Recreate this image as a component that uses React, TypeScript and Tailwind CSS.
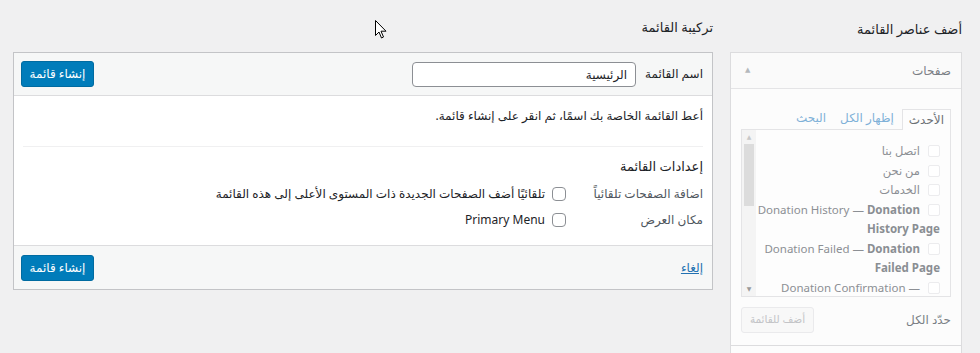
import React from 'react'

const font = "font-['Noto_Sans','DejaVu_Sans',sans-serif]"

function BlueButton({ label }: { label: string }) {
  return (
    <button className="h-[26px] w-[73px] whitespace-nowrap rounded-[3px] border border-[#006ba1] bg-[#007cba] text-[12px] leading-none text-white">
      {label}
    </button>
  )
}

function Box() {
  return <span className="inline-block h-[14px] w-[14px] shrink-0 rounded-[4px] border border-[#8c8f94] bg-white" />
}

const pages: { text: string; bold?: string }[] = [
  { text: 'اتصل بنا' },
  { text: 'من نحن' },
  { text: 'الخدمات' },
  { text: 'Donation History — ', bold: 'Donation History Page' },
  { text: 'Donation Failed — ', bold: 'Donation Failed Page' },
  { text: 'Donation Confirmation — ', bold: 'Donation Confirmation Page' },
]

function AddItems() {
  return (
    <div className="w-[232px] shrink-0">
      <h2 className="h-[52px] pt-[20px] text-[13px] text-[#1d2327]">أضف عناصر القائمة</h2>
      <div className="border border-[#dcdcde] bg-[#fcfcfc]">
        <div className="flex h-[36px] items-center justify-between border-b border-[#e4e4e6] bg-[#fafafa] pl-[14px] pr-[10px]">
          <span className="text-[12px] text-[#7a7f85]">صفحات</span>
          <span className="text-[7px] text-[#b4b8bc]">▲</span>
        </div>
        <div className="px-[10px] pt-[19px]">
          <div className="flex items-end text-[12px]">
            <span className="-mb-px h-[21px] border border-b-0 border-[#e4e4e6] bg-[#fdfdfd] px-[6px] leading-[20px] text-[#6b7075]">
              الأحدث
            </span>
            <span className="mr-[8px] h-[21px] leading-[20px] text-[#7fb1d8]">إظهار الكل</span>
            <span className="mr-[14px] h-[21px] leading-[20px] text-[#7fb1d8]">البحث</span>
          </div>
          <div className="flex h-[168px] border border-[#e4e4e6] bg-[#fdfdfd]">
            <div className="flex-1 overflow-hidden pr-[10px] pt-[11px] text-[11.5px] leading-[19.5px] text-[#8c8f94]">
              {pages.map((p, i) => (
                <div key={i}>
                  <span className="ml-[8px] inline-block h-[12px] w-[12px] rounded-[2px] border border-[#ececee] bg-white align-[-2px]" />
                  {p.text}
                  {p.bold && <b className="font-bold text-[#8a8e93]">{p.bold}</b>}
                </div>
              ))}
            </div>
            <div className="flex w-[14px] shrink-0 flex-col items-center bg-[#f4f4f4]">
              <span className="h-[14px] text-[6px] leading-[14px] text-[#c8c8c8]">▲</span>
              <div className="h-[62px] w-[10px] bg-[#dcdcdc]" />
              <div className="flex-1" />
              <span className="h-[14px] text-[6px] leading-[14px] text-[#9a9a9a]">▼</span>
            </div>
          </div>
          <div className="flex h-[48px] items-center justify-between pb-[2px]">
            <span className="text-[12px] text-[#7a7f85]">حدّد الكل</span>
            <span className="flex h-[26px] w-[73px] items-center justify-center whitespace-nowrap rounded-[3px] border border-[#eaeaec] bg-[#f8f8f8] text-[10.5px] text-[#c3c4c7]">
              أضف للقائمة
            </span>
          </div>
        </div>
        <div className="h-[14px] border-t border-[#dcdcde]" />
      </div>
    </div>
  )
}

function MenuStructure() {
  return (
    <div className="flex-1">
      <h2 className="h-[52px] pt-[18px] text-[13px] text-[#1d2327]">تركيبة القائمة</h2>
      <div className="border border-[#c3c4c7] bg-white">
        <div className="flex h-[43px] items-center justify-between border-b border-[#dcdcde] bg-[#f6f7f7] pl-[7px] pr-[9px]">
          <div className="flex items-center gap-[9px]">
            <span className="text-[12px] text-[#1d2327]">اسم القائمة</span>
            <input
              readOnly
              value="الرئيسية"
              className="h-[25px] w-[224px] rounded-[4px] border border-[#8c8f94] bg-white px-[8px] text-[12px] text-[#1d2327] outline-none"
            />
          </div>
          <BlueButton label="إنشاء قائمة" />
        </div>
        <div className="h-[149px] px-[9px]">
          <p className="h-[50px] pt-[10px] text-[12px] leading-[20px] text-[#1d2327]">
            أعط القائمة الخاصة بك اسمًا، ثم انقر على إنشاء قائمة.
          </p>
          <div className="border-t border-[#f0f0f1]" />
          <h3 className="h-[36px] pt-[9px] text-[13px] leading-[20px] text-[#1d2327]">إعدادات القائمة</h3>
          <div className="flex h-[22px] items-center">
            <span className="w-[137px] text-[12px] text-[#50575e]">اضافة الصفحات تلقائياً</span>
            <Box />
            <span className="mr-[7px] text-[12px] text-[#1d2327]">
              تلقائيًا أضف الصفحات الجديدة ذات المستوى الأعلى إلى هذه القائمة
            </span>
          </div>
          <div className="mt-[4px] flex h-[22px] items-center">
            <span className="w-[137px] text-[12px] text-[#50575e]">مكان العرض</span>
            <Box />
            <span className="mr-[7px] text-[12px] text-[#1d2327]">Primary Menu</span>
          </div>
        </div>
        <div className="flex h-[44px] items-center justify-between border-t border-[#dcdcde] bg-[#f6f7f7] pl-[7px] pr-[9px]">
          <a className="text-[12px] text-[#2271b1] underline">إلغاء</a>
          <BlueButton label="إنشاء قائمة" />
        </div>
      </div>
    </div>
  )
}

export default function App() {
  return (
    <div dir="rtl" className={`relative h-[353px] w-[980px] overflow-hidden bg-[#f0f0f1] ${font}`}>
      <div className="flex gap-[17px] pl-[13px] pr-[18px]">
        <AddItems />
        <MenuStructure />
      </div>
      <svg className="absolute left-[375px] top-[20px]" width="12" height="19" viewBox="0 0 12 19">
        <path d="M0.5 0.5 L0.5 15.5 L4 12 L6.5 18 L8.5 17 L6 11.2 L11 11.2 Z" fill="#fff" stroke="#000" strokeWidth="1" strokeLinejoin="round" />
      </svg>
    </div>
  )
}
